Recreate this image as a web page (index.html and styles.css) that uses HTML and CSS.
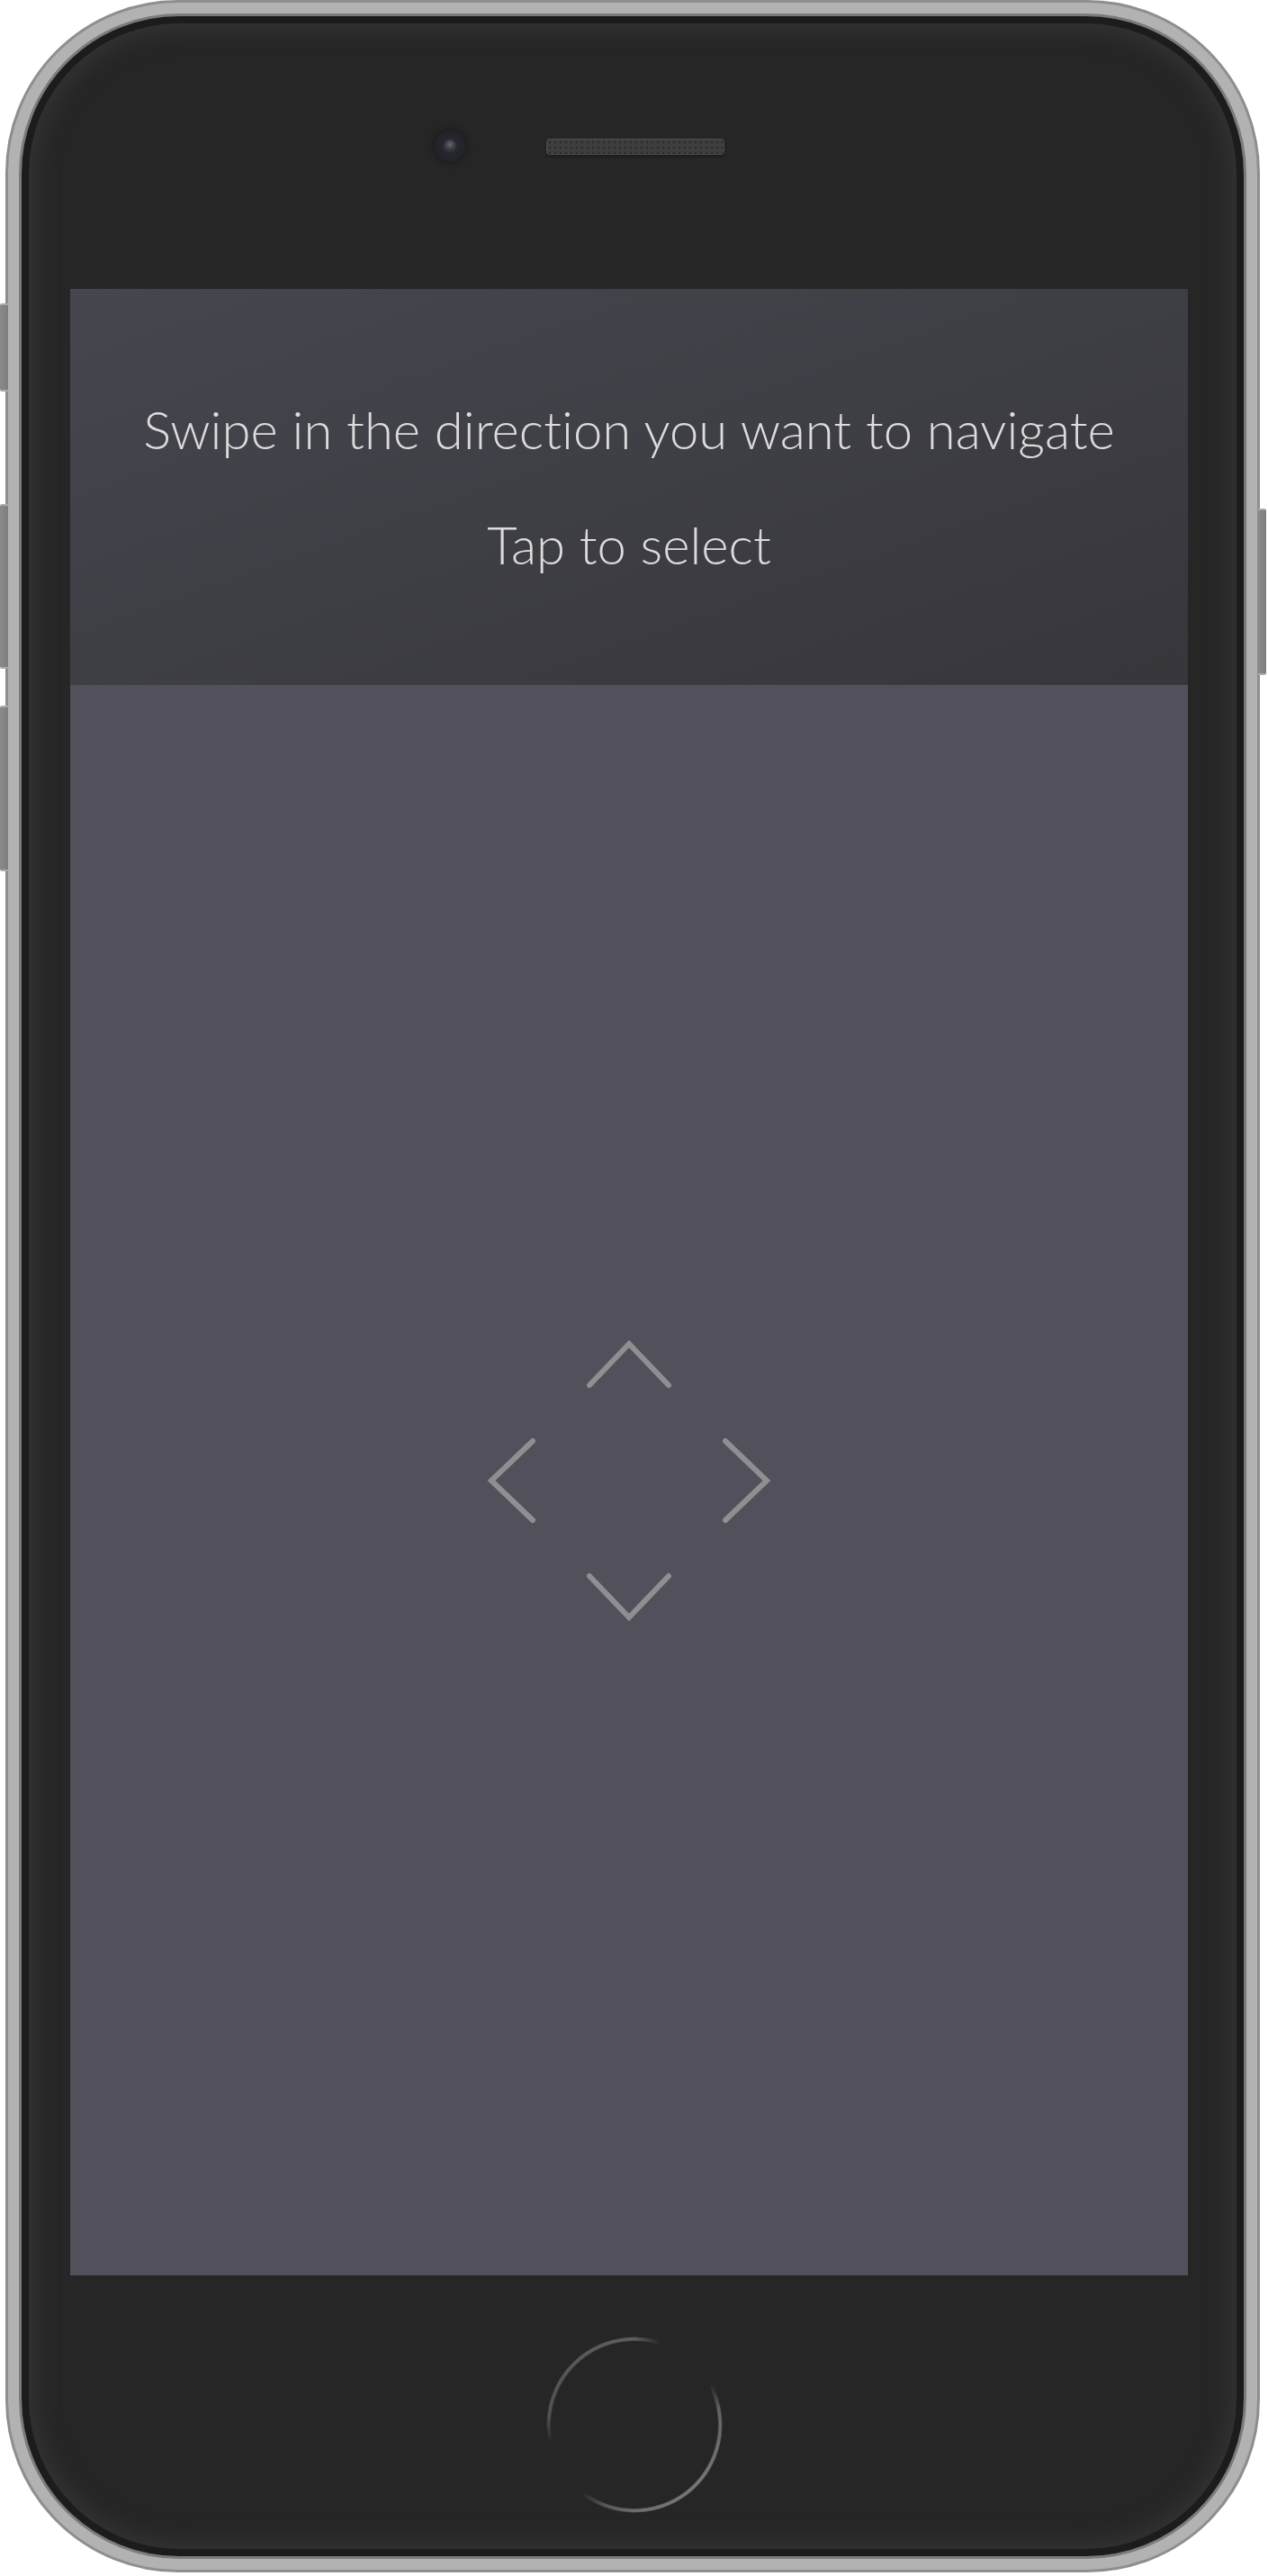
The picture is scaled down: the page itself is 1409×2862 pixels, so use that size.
FILE: index.html
```html
<!DOCTYPE html>
<html lang="en">
<head>
<meta charset="utf-8">
<title>Swipe navigation</title>
<link rel="stylesheet" href="styles.css">
</head>
<body>
<div class="stage">
  <div class="phone">
    <span class="side-btn mute"></span>
    <span class="side-btn vol-up"></span>
    <span class="side-btn vol-down"></span>
    <span class="side-btn power"></span>
    <div class="bezel">
      <div class="top">
        <div class="camera"><span class="lens"></span></div>
        <div class="speaker"></div>
        <div class="spacer"></div>
      </div>
      <div class="screen">
        <header class="screen-head">
          <p class="line">Swipe in the direction you want to navigate</p>
          <p class="line">Tap to select</p>
        </header>
        <main class="screen-body">
          <svg class="dpad" width="320" height="320" viewBox="0 0 320 320" aria-hidden="true">
            <g fill="none" stroke="#8f8f91" stroke-width="6" stroke-linecap="round" stroke-linejoin="miter">
              <polyline points="116,54 160,8 204,54"/>
              <polyline points="116,266 160,312 204,266"/>
              <polyline points="53,116 7,160 53,204"/>
              <polyline points="267,116 313,160 267,204"/>
            </g>
          </svg>
        </main>
      </div>
      <div class="bottom">
        <div class="home"></div>
      </div>
    </div>
  </div>
</div>
</body>
</html>
```

FILE: styles.css
```css
html, body {
  margin: 0;
  padding: 0;
  background: #ffffff;
}

.stage {
  width: 1409px;
  height: 2862px;
  padding-left: 6px;
  box-sizing: border-box;
}

.phone {
  position: relative;
  width: 1394px;
  height: 2858px;
  box-sizing: border-box;
  border-radius: 192px;
  border: 3px solid #8e8e8e;
  padding: 12px;
  background: #b2b2b2;
}

.side-btn {
  position: absolute;
  width: 9px;
  background: linear-gradient(to right, #8a8a8a, #7e7e7e);
  border-top: 2px solid #a9a9a9;
  border-bottom: 2px solid #a9a9a9;
  box-sizing: border-box;
}
.mute { left: -9px; top: 334px; height: 98px; border-radius: 2px 0 0 2px; }
.vol-up { left: -9px; top: 557px; height: 183px; border-radius: 2px 0 0 2px; }
.vol-down { left: -9px; top: 781px; height: 184px; border-radius: 2px 0 0 2px; }
.power { right: -10px; top: 562px; height: 185px; width: 9px; border-radius: 0 2px 2px 0; }

.bezel {
  height: 100%;
  box-sizing: border-box;
  border: 3px solid #7b7b7b;
  border-radius: 178px;
  background: #262626;
  box-shadow:
    inset 0 0 0 8px #1c1c1c,
    inset 0 0 26px 14px #353535;
  display: flex;
  flex-direction: column;
  align-items: center;
}

.top {
  height: 303px;
  width: 100%;
  box-sizing: border-box;
  padding-top: 127px;
  padding-left: 6px;
  display: flex;
  justify-content: center;
  align-items: flex-start;
  gap: 90px;
}

.camera {
  width: 34px;
  height: 34px;
  border-radius: 50%;
  background: radial-gradient(circle, #2c2c33 0%, #23232a 60%, #242428 100%);
  box-shadow: 0 0 6px 2px rgba(20, 20, 24, 0.6);
  display: flex;
  align-items: center;
  justify-content: center;
}
.lens {
  width: 14px;
  height: 14px;
  border-radius: 50%;
  background: radial-gradient(circle at 50% 40%, #6a6a72 0%, #3c3c46 45%, #2a2a32 100%);
}

.speaker {
  margin-top: 9px;
  width: 198px;
  height: 18px;
  border-radius: 4px;
  background-color: #3e3e3e;
  background-image:
    radial-gradient(circle, #2a2a2a 1.2px, transparent 1.6px);
  background-size: 6px 6px;
  background-position: 1px 1px;
  box-shadow: inset 0 0 0 1px #4c4c4c, 0 2px 3px rgba(0, 0, 0, 0.3);
}

.spacer {
  width: 34px;
  height: 34px;
}

.screen {
  align-self: flex-start;
  margin-left: 54px;
  width: 1242px;
  height: 2207px;
  display: flex;
  flex-direction: column;
  background: #52505a;
}

.screen-head {
  height: 440px;
  flex: none;
  background: linear-gradient(to bottom right, #46464f, #36363b);
  display: flex;
  flex-direction: column;
  align-items: center;
  justify-content: center;
  gap: 60px;
  box-sizing: border-box;
}

.line {
  margin: 0;
  font-family: Lato, "Open Sans", "Liberation Sans", sans-serif;
  font-weight: 300;
  font-size: 58px;
  line-height: 68px;
  color: #dcdcdc;
  white-space: nowrap;
  font-variant-ligatures: none;
}

.screen-body {
  flex: 1;
  display: flex;
  align-items: center;
  justify-content: center;
}

.dpad {
  display: block;
}

.bottom {
  flex: 1;
  width: 100%;
  display: flex;
  justify-content: center;
  align-items: flex-start;
  padding-top: 68px;
  padding-left: 4px;
  box-sizing: border-box;
}

.home {
  width: 196px;
  height: 196px;
  border-radius: 50%;
  background: conic-gradient(from 0deg,
    #5e5e5e 0deg,
    rgba(60,60,60,0) 18deg,
    rgba(60,60,60,0) 62deg,
    #636363 80deg,
    #767676 130deg,
    #707070 175deg,
    #585858 200deg,
    rgba(60,60,60,0) 218deg,
    rgba(60,60,60,0) 258deg,
    #505050 275deg,
    #5a5a5a 320deg,
    #5e5e5e 360deg);
  -webkit-mask: radial-gradient(circle closest-side, transparent 92.5px, #000 94px, #000 96.5px, transparent 98px);
  mask: radial-gradient(circle closest-side, transparent 92.5px, #000 94px, #000 96.5px, transparent 98px);
}
```
